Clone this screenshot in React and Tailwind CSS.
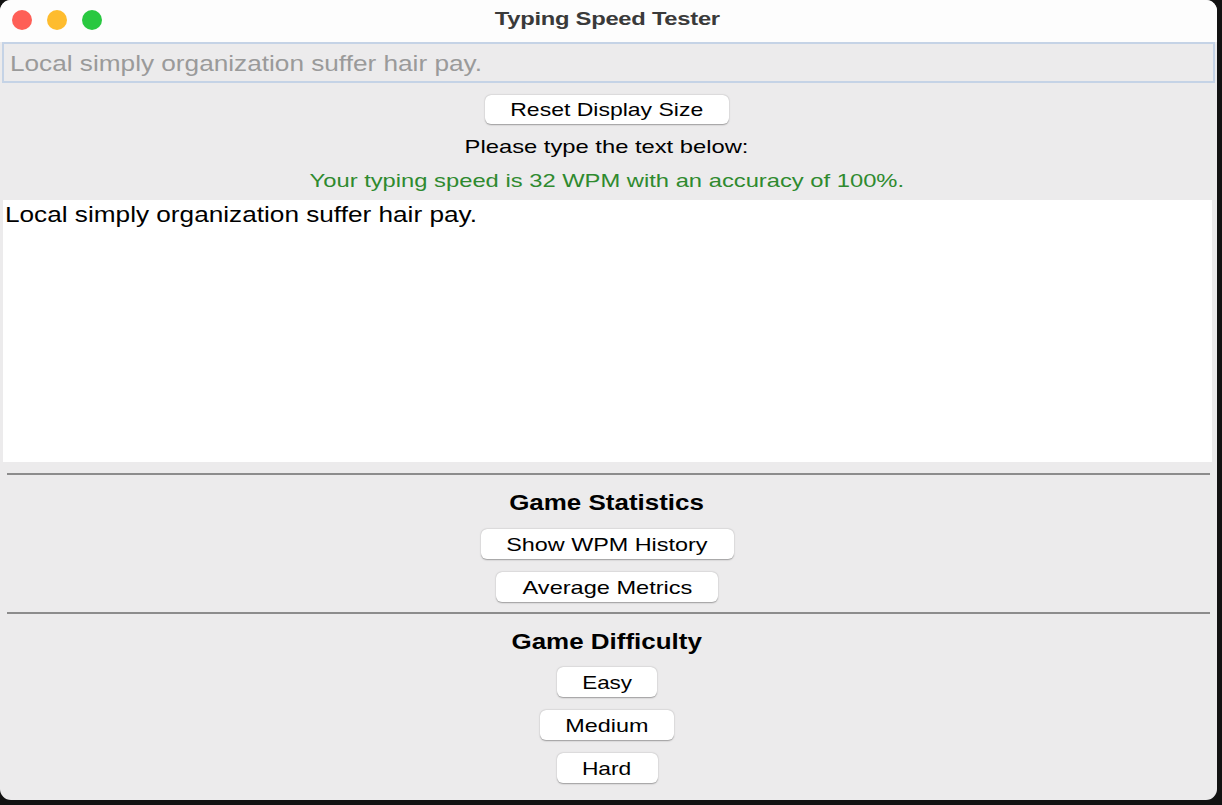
export default function App() {
  const font = { fontFamily: '"Liberation Sans", Arial, sans-serif' };
  const btn =
    "bg-white rounded-[6px] shadow-[0_0.5px_1.5px_rgba(0,0,0,0.35)] text-[19px] text-black leading-none flex items-center justify-center";
  return (
    <div className="w-[1222px] h-[805px] bg-[#121212] overflow-hidden" style={font}>
      <div className="w-[1217px] h-[800px] bg-[#ecebec] rounded-[11px] overflow-hidden flex flex-col">
        {/* title bar */}
        <div className="h-[42px] bg-[#fdfdfd] relative flex items-center justify-center shrink-0 pr-[3px]">
          <div className="absolute left-[12px] top-[10px] flex gap-[15px]">
            <div className="w-[20px] h-[20px] rounded-full bg-[#fe5f57]" />
            <div className="w-[20px] h-[20px] rounded-full bg-[#febc2e]" />
            <div className="w-[20px] h-[20px] rounded-full bg-[#29c840]" />
          </div>
          <span className="inline-block scale-x-[1.32] text-[18px] font-bold text-[#3a3a3a] tracking-[-0.2px] mt-[-3px]">
            Typing Speed Tester
          </span>
        </div>
        {/* entry */}
        <div className="mx-[2px] h-[41px] border-2 border-[#c5d3e6] bg-[#ecebec] flex items-center pl-[6px] pt-[3px] shrink-0">
          <span className="inline-block origin-left scale-x-[1.19] text-[22px] text-[#9a9a9a] leading-none">
            Local simply organization suffer hair pay.
          </span>
        </div>
        <div className="flex flex-col items-center shrink-0 pr-[3px]">
          <div className={btn + " mt-[12px] w-[244px] h-[29px]"}>
            <span className="inline-block scale-x-[1.21]">Reset Display Size</span>
          </div>
          <div className="mt-[12px] text-[19px] leading-[22px] text-black">
            <span className="inline-block scale-x-[1.25]">Please type the text below:</span>
          </div>
          <div className="mt-[12px] text-[19px] leading-[22px] text-[#2f8a2f]">
            <span className="inline-block scale-x-[1.25]">
              Your typing speed is 32 WPM with an accuracy of 100%.
            </span>
          </div>
        </div>
        {/* text area */}
        <div className="mt-[8px] ml-[3px] w-[1209px] h-[262px] bg-white shrink-0 pl-[2px] pt-[2px]">
          <span className="inline-block origin-left scale-x-[1.19] text-[22px] leading-[26px] text-black">
            Local simply organization suffer hair pay.
          </span>
        </div>
        {/* separator */}
        <div className="mt-[11px] mx-[7px] h-[2px] bg-[#8c8c8c] shrink-0" />
        <div className="flex flex-col items-center shrink-0 pr-[3px]">
          <div className="mt-[16px] text-[22px] font-bold leading-[24px] text-black">
            <span className="inline-block scale-x-[1.18]">Game Statistics</span>
          </div>
          <div className={btn + " mt-[14px] w-[253px] h-[30px]"}>
            <span className="inline-block scale-x-[1.23]">Show WPM History</span>
          </div>
          <div className={btn + " mt-[13px] w-[222px] h-[30px]"}>
            <span className="inline-block scale-x-[1.24]">Average Metrics</span>
          </div>
        </div>
        <div className="mt-[10px] mx-[7px] h-[2px] bg-[#8c8c8c] shrink-0" />
        <div className="flex flex-col items-center shrink-0 pr-[3px]">
          <div className="mt-[16px] text-[22px] font-bold leading-[24px] text-black">
            <span className="inline-block scale-x-[1.18]">Game Difficulty</span>
          </div>
          <div className={btn + " mt-[13px] w-[100px] h-[30px]"}>
            <span className="inline-block scale-x-[1.18]">Easy</span>
          </div>
          <div className={btn + " mt-[13px] w-[134px] h-[30px]"}>
            <span className="inline-block scale-x-[1.23]">Medium</span>
          </div>
          <div className={btn + " mt-[13px] w-[101px] h-[30px]"}>
            <span className="inline-block scale-x-[1.2]">Hard</span>
          </div>
        </div>
      </div>
    </div>
  );
}
